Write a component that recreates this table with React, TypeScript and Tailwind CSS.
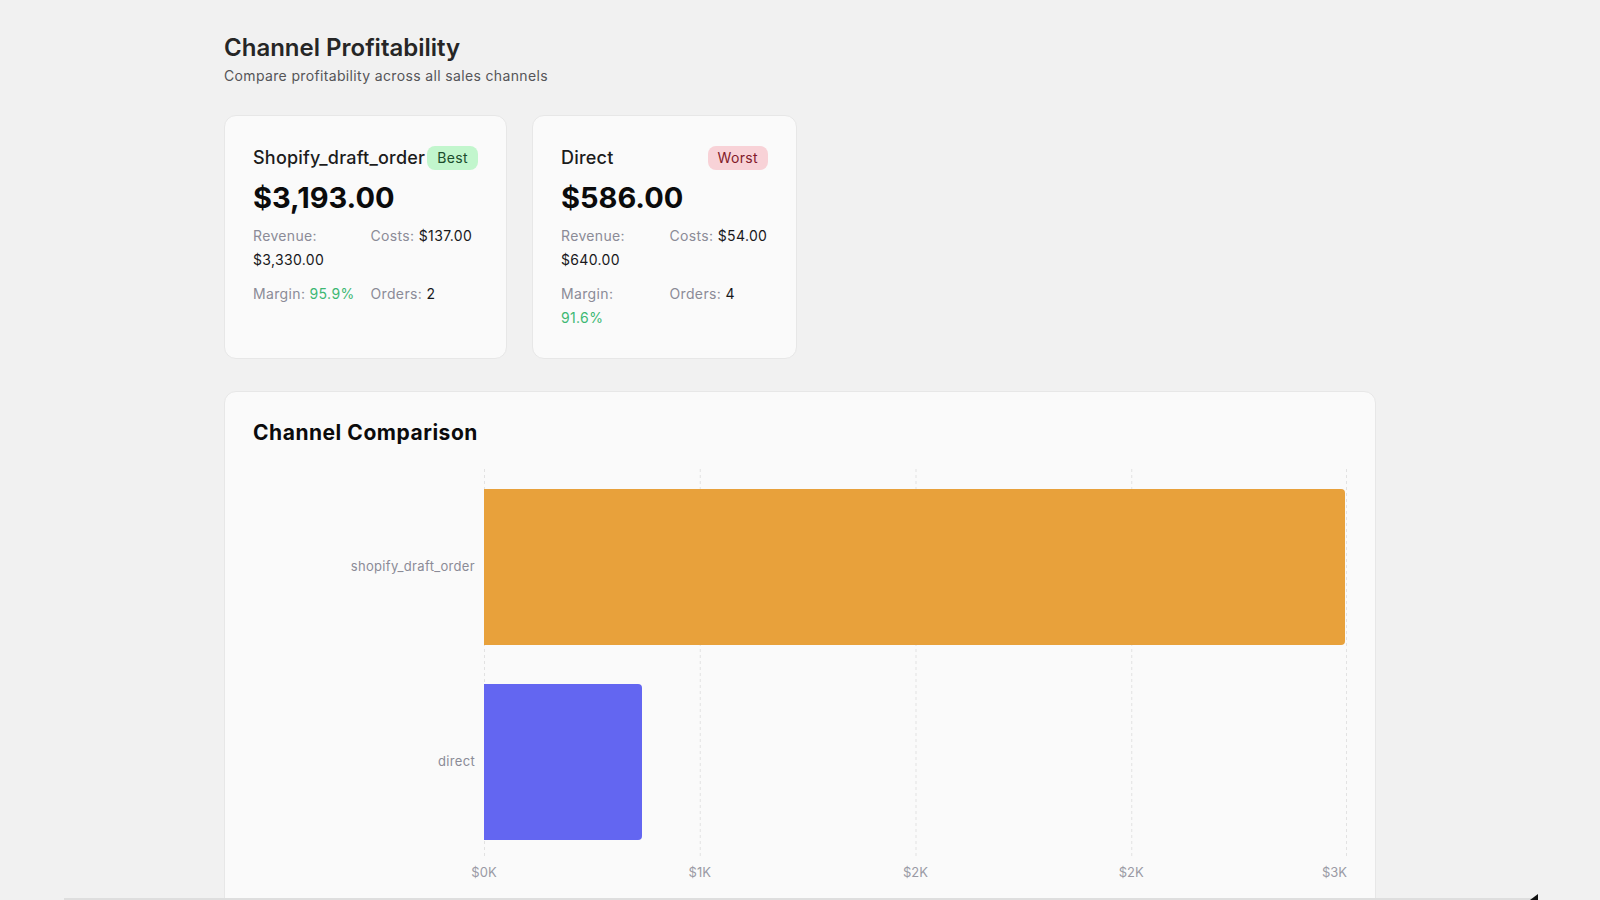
import React from 'react';

type Channel = {
  name: string;
  tag: 'Best' | 'Worst';
  profit: string;
  revenue: string;
  costs: string;
  margin: string;
  orders: number;
  width: string;
  marginWraps: boolean;
};

const channels: Channel[] = [
  {
    name: 'Shopify_draft_order',
    tag: 'Best',
    profit: '$3,193.00',
    revenue: '$3,330.00',
    costs: '$137.00',
    margin: '95.9%',
    orders: 2,
    width: 'w-[283px]',
    marginWraps: false,
  },
  {
    name: 'Direct',
    tag: 'Worst',
    profit: '$586.00',
    revenue: '$640.00',
    costs: '$54.00',
    margin: '91.6%',
    orders: 4,
    width: 'w-[265px]',
    marginWraps: true,
  },
];

const bars = [
  { label: 'shopify_draft_order', value: 3193, color: 'bg-[#e8a13b]' },
  { label: 'direct', value: 586, color: 'bg-[#6366f1]' },
];

const MAX = 3200;
const ticks = [0, 800, 1600, 2400, 3200];

function ChannelCard({ c }: { c: Channel }) {
  return (
    <div className={`${c.width} rounded-xl border border-[#e7e7e7] bg-[#fafafa] p-7`}>
      <div className="flex items-center justify-between">
        <span className="text-lg font-medium leading-7 tracking-[0.012em] text-[#1c1c1c]">{c.name}</span>
        {c.tag === 'Best' ? (
          <span className="shrink-0 rounded-lg bg-[#c2f6cd] px-2.5 py-0.5 text-sm leading-5 tracking-wide text-[#1b4d2c]">
            Best
          </span>
        ) : (
          <span className="shrink-0 rounded-lg bg-[#f8d2d7] px-2.5 py-0.5 text-sm leading-5 tracking-wide text-[#821a2a]">
            Worst
          </span>
        )}
      </div>
      <div className="mt-2 text-[29px] font-bold leading-9 text-[#0b0b0c]">{c.profit}</div>
      <div className="mt-2 grid grid-cols-2 gap-2.5 text-sm leading-6 tracking-wide">
        <div>
          <span className="text-[#8b8b97]">Revenue:</span> <span className="text-[#18181b]">{c.revenue}</span>
        </div>
        <div>
          <span className="text-[#8b8b97]">Costs:</span> <span className="text-[#18181b]">{c.costs}</span>
        </div>
        <div>
          <span className="text-[#8b8b97]">Margin:</span>{' '}
          <span className={`text-[#3db873] ${c.marginWraps ? 'block' : ''}`}>{c.margin}</span>
        </div>
        <div>
          <span className="text-[#8b8b97]">Orders:</span> <span className="text-[#18181b]">{c.orders}</span>
        </div>
      </div>
    </div>
  );
}

function ComparisonChart() {
  return (
    <div>
      <div className="flex">
        {/* category axis */}
        <div className="flex h-[390px] w-[231px] shrink-0 flex-col">
          {bars.map((b) => (
            <div
              key={b.label}
              className="flex flex-1 items-center justify-end pr-[9px] text-[13px] tracking-wide text-[#8b8b97]"
            >
              {b.label}
            </div>
          ))}
        </div>
        {/* plot */}
        <div className="relative h-[390px] flex-1">
          <svg className="absolute inset-0 h-full w-full" preserveAspectRatio="none">
            {ticks.map((t, i) => (
              <line
                key={t}
                x1={`${(t / MAX) * 100}%`}
                x2={`${(t / MAX) * 100}%`}
                y1="0"
                y2="100%"
                stroke="#e2e2e2"
                strokeDasharray="3 3"
                strokeWidth="1"
                transform={i === ticks.length - 1 ? 'translate(-0.5 0)' : 'translate(0.5 0)'}
              />
            ))}
          </svg>
          <div className="relative flex h-full flex-col">
            {bars.map((b) => (
              <div key={b.label} className="flex flex-1 items-center">
                <div
                  className={`h-[80%] rounded-r-[4px] ${b.color}`}
                  style={{ width: `${(b.value / MAX) * 100}%` }}
                />
              </div>
            ))}
          </div>
        </div>
      </div>
      {/* value axis */}
      <div className="flex">
        <div className="w-[231px] shrink-0" />
        <div className="relative mt-[5px] h-4 flex-1 text-[13px] leading-4 text-[#9a9aa5]">
          {ticks.map((t, i) => (
            <span
              key={t}
              className={`absolute top-0 ${i === ticks.length - 1 ? '-translate-x-full' : '-translate-x-1/2'}`}
              style={{ left: `${(t / MAX) * 100}%` }}
            >
              ${(t / 1000).toFixed(0)}K
            </span>
          ))}
        </div>
      </div>
    </div>
  );
}

export default function App() {
  return (
    <div className="min-h-screen overflow-hidden bg-[#f1f1f1] font-['Inter',sans-serif]">
      <div className="mx-auto max-w-6xl pt-8">
        <h1 className="text-2xl font-semibold leading-8 text-[#262626]">Channel Profitability</h1>
        <p className="mt-0.5 text-sm leading-5 tracking-wide text-[#555558]">
          Compare profitability across all sales channels
        </p>

        <div className="mt-[29px] flex gap-[25px]">
          {channels.map((c) => (
            <ChannelCard key={c.name} c={c} />
          ))}
        </div>

        <div className="mt-8 rounded-xl border border-[#e7e7e7] bg-[#fafafa] px-7 pb-10 pt-[27px]">
          <h2 className="text-[21px] font-bold leading-7 tracking-wide text-[#0b0b0c]">Channel Comparison</h2>
          <div className="mt-[22px]">
            <ComparisonChart />
          </div>
        </div>
      </div>

      {/* bottom edge of an overlay bar */}
      <div className="fixed bottom-0 left-[64px] right-[63px] h-[2px] bg-[#dedede]" />
      <svg className="fixed bottom-0 right-[62px]" width="8" height="6" viewBox="0 0 8 6">
        <path d="M0 6 L8 0 L8 6 Z" fill="#111" />
      </svg>
    </div>
  );
}
